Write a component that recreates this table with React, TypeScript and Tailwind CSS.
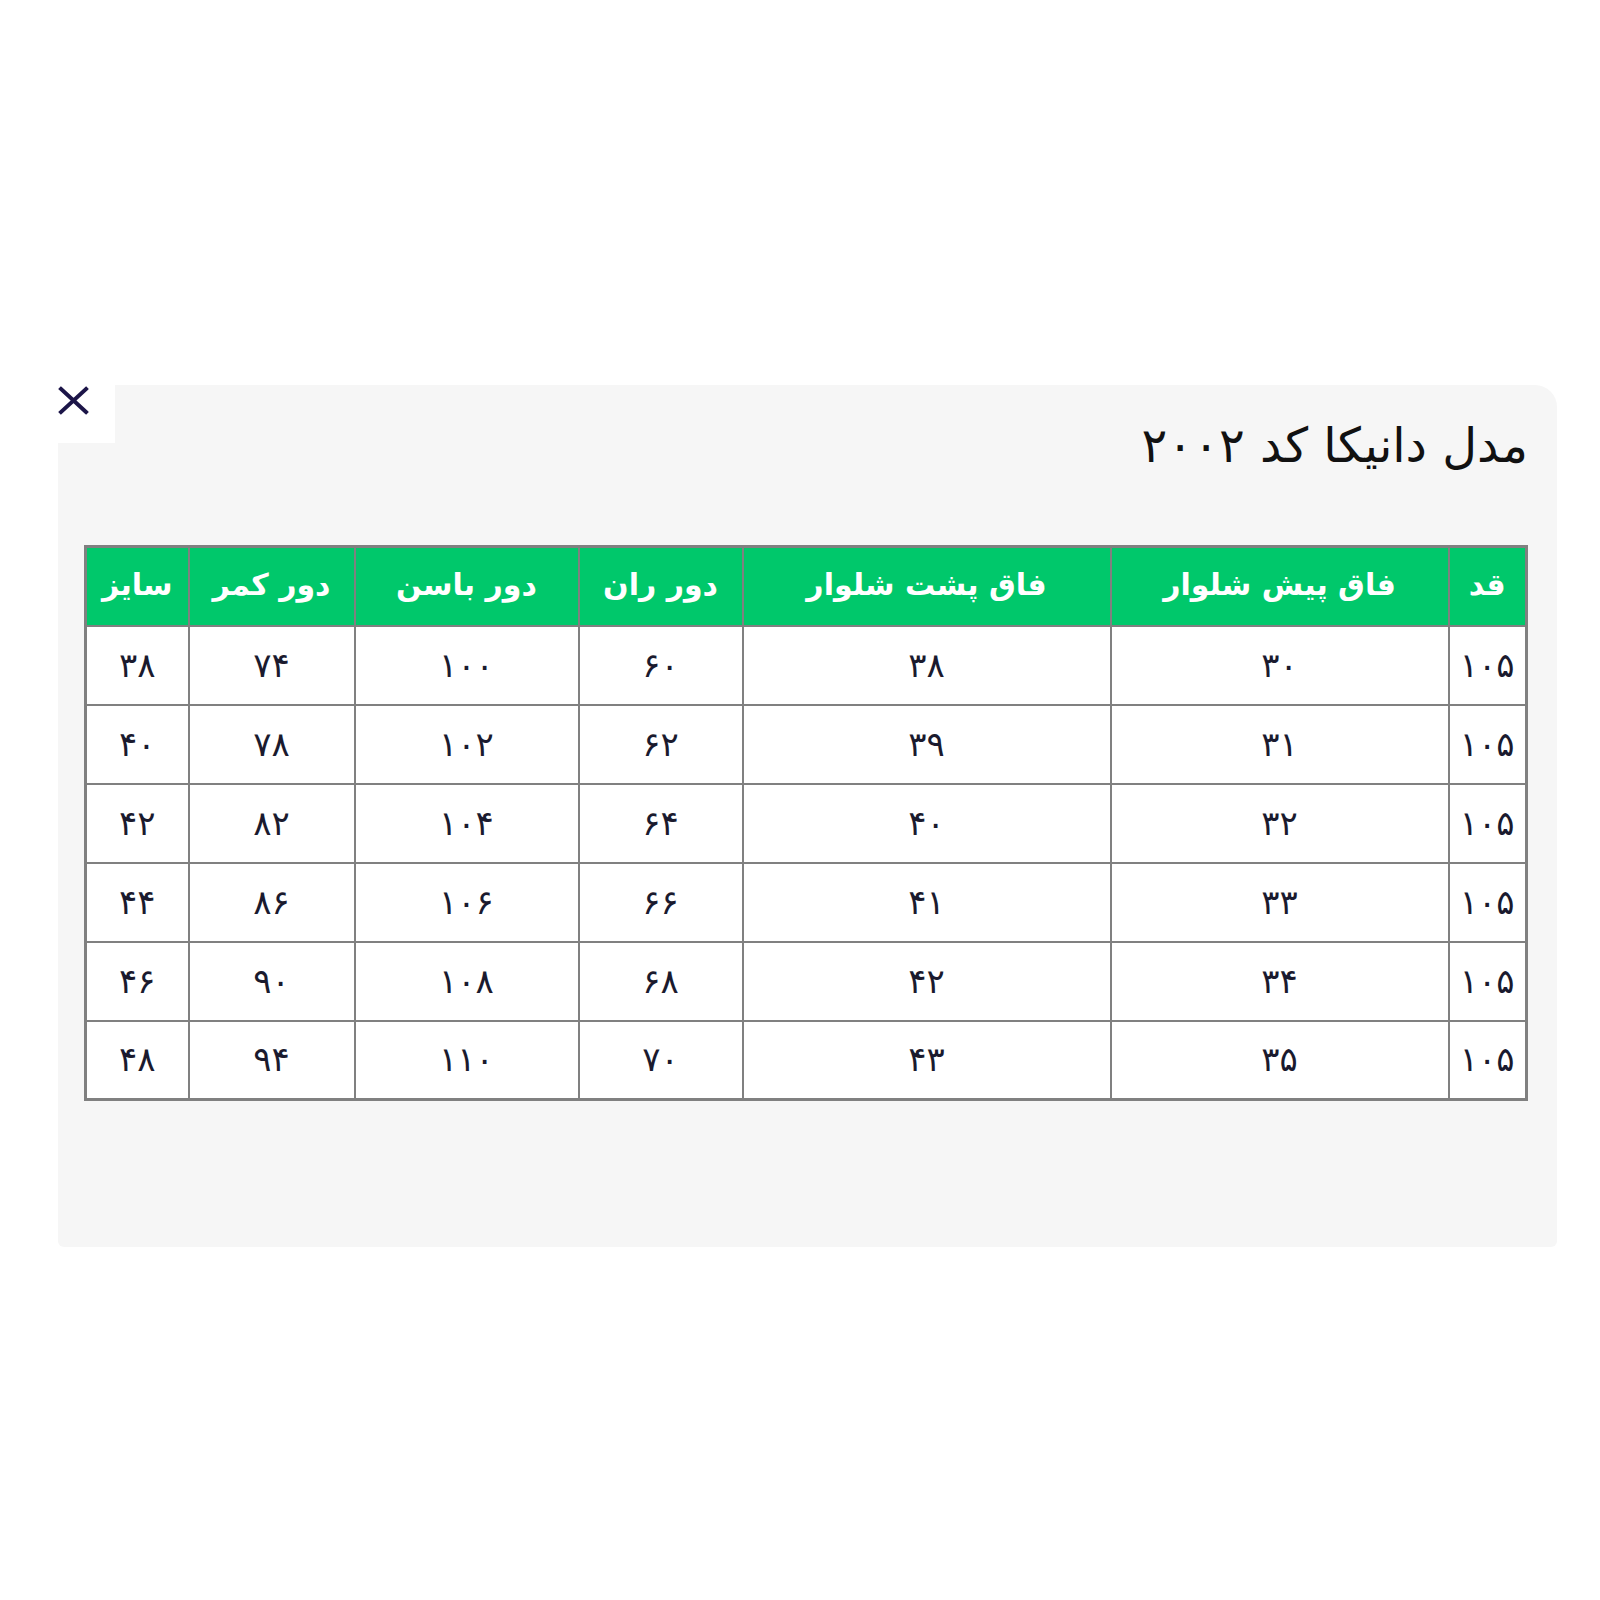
import React from 'react';

const headers = ['قد', 'فاق پیش شلوار', 'فاق پشت شلوار', 'دور ران', 'دور باسن', 'دور کمر', 'سایز'];
const widths = ['w-[78px]', 'w-[338px]', 'w-[368px]', 'w-[164px]', 'w-[224px]', 'w-[166px]', 'w-[103px]'];

const rows = [
  ['۱۰۵', '۳۰', '۳۸', '۶۰', '۱۰۰', '۷۴', '۳۸'],
  ['۱۰۵', '۳۱', '۳۹', '۶۲', '۱۰۲', '۷۸', '۴۰'],
  ['۱۰۵', '۳۲', '۴۰', '۶۴', '۱۰۴', '۸۲', '۴۲'],
  ['۱۰۵', '۳۳', '۴۱', '۶۶', '۱۰۶', '۸۶', '۴۴'],
  ['۱۰۵', '۳۴', '۴۲', '۶۸', '۱۰۸', '۹۰', '۴۶'],
  ['۱۰۵', '۳۵', '۴۳', '۷۰', '۱۱۰', '۹۴', '۴۸'],
];

export default function App() {
  return (
    <div className="min-h-[1600px] bg-white pt-[385px]" style={{ fontFamily: '"DejaVu Sans", sans-serif' }}>
      <div dir="rtl" className="relative ml-[58px] w-[1499px] h-[862px] bg-[#f6f6f6] rounded-tr-[22px] rounded-br-[6px] rounded-bl-[6px] px-[29px] pt-[28px]">
        {/* close button */}
        <button dir="ltr" className="absolute left-0 top-0 w-[57px] h-[58px] bg-white flex items-start justify-start">
          <svg width="32" height="29" viewBox="0 0 32 29" className="mt-[1px]">
            <path d="M3 3 L28 26 M28 3 L3 26" stroke="#1c1548" strokeWidth="4" strokeLinecap="square" fill="none" />
          </svg>
        </button>

        <h1 className="text-[48px] leading-[64px] text-[#111] font-normal">مدل دانیکا کد ۲۰۰۲</h1>

        <table className="mt-[68px] w-[1441px] table-fixed border-collapse border-[3px] border-[#808080]">
          <colgroup>
            {widths.map((w, i) => (
              <col key={i} className={w} />
            ))}
          </colgroup>
          <thead>
            <tr className="h-[79px] bg-[#00c86b]">
              {headers.map(h => (
                <th key={h} className="border-2 border-[#808080] text-white font-bold text-[30px] text-center pb-[4px]">
                  {h}
                </th>
              ))}
            </tr>
          </thead>
          <tbody>
            {rows.map((r, i) => (
              <tr key={i} className="h-[79px] bg-white">
                {r.map((c, j) => (
                  <td key={j} className="border-2 border-[#808080] text-center text-[34px] text-[#1a1a2e]">
                    {c}
                  </td>
                ))}
              </tr>
            ))}
          </tbody>
        </table>
      </div>
    </div>
  );
}
